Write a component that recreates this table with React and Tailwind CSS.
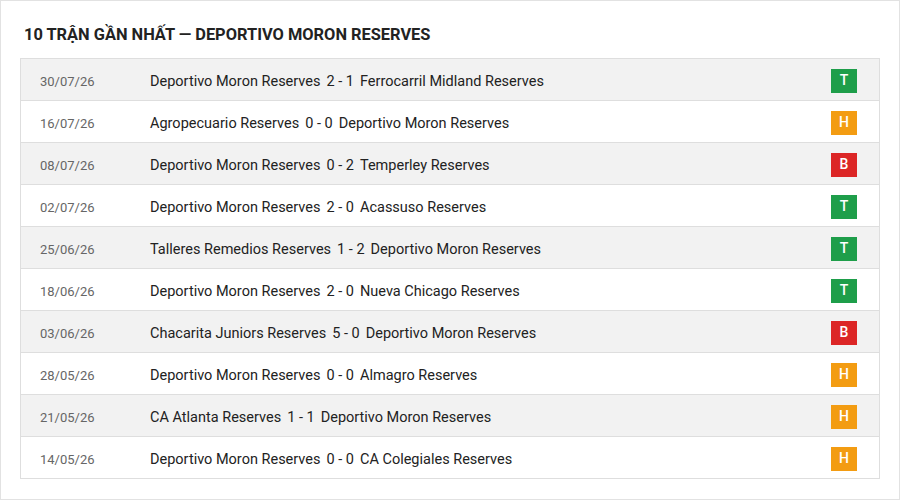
import React from "react";

const rows = [
  ["30/07/26", "Deportivo Moron Reserves", "2 - 1", "Ferrocarril Midland Reserves", "T"],
  ["16/07/26", "Agropecuario Reserves", "0 - 0", "Deportivo Moron Reserves", "H"],
  ["08/07/26", "Deportivo Moron Reserves", "0 - 2", "Temperley Reserves", "B"],
  ["02/07/26", "Deportivo Moron Reserves", "2 - 0", "Acassuso Reserves", "T"],
  ["25/06/26", "Talleres Remedios Reserves", "1 - 2", "Deportivo Moron Reserves", "T"],
  ["18/06/26", "Deportivo Moron Reserves", "2 - 0", "Nueva Chicago Reserves", "T"],
  ["03/06/26", "Chacarita Juniors Reserves", "5 - 0", "Deportivo Moron Reserves", "B"],
  ["28/05/26", "Deportivo Moron Reserves", "0 - 0", "Almagro Reserves", "H"],
  ["21/05/26", "CA Atlanta Reserves", "1 - 1", "Deportivo Moron Reserves", "H"],
  ["14/05/26", "Deportivo Moron Reserves", "0 - 0", "CA Colegiales Reserves", "H"],
];

const badge = {
  T: "bg-[#1e9e4a]",
  H: "bg-[#f39c12]",
  B: "bg-[#dc2626]",
};

export default function App() {
  return (
    <div
      className="w-[900px] h-[500px] bg-white border border-[#e2e2e2] px-[19px] pt-[23px]"
      style={{ fontFamily: "Roboto, 'Liberation Sans', sans-serif" }}
    >
      <h2 className="pl-[4px] h-[22px] leading-[22px] text-[16.4px] font-bold text-[#222]">
        10 TRẬN GẦN NHẤT — DEPORTIVO MORON RESERVES
      </h2>
      <div className="mt-[12px] border border-[#dedede] border-b-0">
        {rows.map((r, i) => (
          <div
            key={i}
            className={`flex items-center h-[42px] border-b border-[#dedede] ${i % 2 === 0 ? "bg-[#f2f2f2]" : "bg-white"}`}
          >
            <div className="w-[129px] pl-[19px] pt-[4px] leading-[18px] text-[13px] text-[#666]">{r[0]}</div>
            <div className="flex-1 pt-[4px] leading-[18px] text-[14.5px] text-[#222] whitespace-pre">
              <span>{r[1]}</span>
              <span className="px-[6px]">{r[2]}</span>
              <span>{r[3]}</span>
            </div>
            <div
              className={`w-[26px] h-[24px] mr-[22px] mt-[2px] flex items-center justify-center text-white text-[14px] font-medium ${badge[r[4]]}`}
            >
              {r[4]}
            </div>
          </div>
        ))}
      </div>
    </div>
  );
}
